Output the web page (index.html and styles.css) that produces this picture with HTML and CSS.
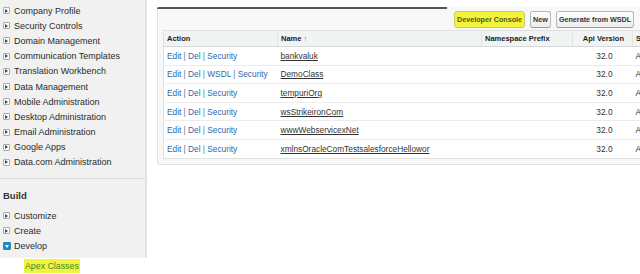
FILE: index.html
```html
<!DOCTYPE html>
<html>
<head>
<meta charset="utf-8">
<link rel="stylesheet" href="styles.css">
</head>
<body>
<div class="page">
  <aside class="side">
    <div class="panel">
      <ul class="nav top">
        <li><span class="tw"></span>Company Profile</li>
        <li><span class="tw"></span>Security Controls</li>
        <li><span class="tw"></span>Domain Management</li>
        <li><span class="tw"></span>Communication Templates</li>
        <li><span class="tw"></span>Translation Workbench</li>
        <li><span class="tw"></span>Data Management</li>
        <li><span class="tw"></span>Mobile Administration</li>
        <li><span class="tw"></span>Desktop Administration</li>
        <li><span class="tw"></span>Email Administration</li>
        <li><span class="tw"></span>Google Apps</li>
        <li><span class="tw"></span>Data.com Administration</li>
      </ul>
      <div class="build">
        <h3 class="build-title">Build</h3>
        <ul class="nav">
          <li><span class="tw"></span>Customize</li>
          <li><span class="tw"></span>Create</li>
          <li><span class="tw open"></span>Develop</li>
        </ul>
      </div>
    </div>
    <div class="sub"><span class="hl">Apex Classes</span></div>
  </aside>
  <main class="main">
    <div class="block">
      <div class="pb-head">
        <div class="pb-title"></div>
        <div class="pb-btns">
          <button class="btn btn-hl">Developer Console</button>
          <button class="btn">New</button>
          <button class="btn">Generate from WSDL</button>
        </div>
      </div>
      <table class="list">
        <colgroup>
          <col class="c-action"><col class="c-name"><col class="c-ns"><col class="c-api"><col class="c-status">
        </colgroup>
        <thead>
          <tr><th>Action</th><th>Name <span class="sort">&#8593;</span></th><th>Namespace Prefix</th><th class="num">Api Version</th><th>Status</th></tr>
        </thead>
        <tbody>
          <tr><td class="act"><a>Edit</a> | <a>Del</a> | <a>Security</a></td><td><a class="nm">bankvaluk</a></td><td></td><td class="num">32.0</td><td>Active</td></tr>
          <tr><td class="act"><a>Edit</a> | <a>Del</a> | <a>WSDL</a> | <a>Security</a></td><td><a class="nm">DemoClass</a></td><td></td><td class="num">32.0</td><td>Active</td></tr>
          <tr><td class="act"><a>Edit</a> | <a>Del</a> | <a>Security</a></td><td><a class="nm">tempuriOrg</a></td><td></td><td class="num">32.0</td><td>Active</td></tr>
          <tr><td class="act"><a>Edit</a> | <a>Del</a> | <a>Security</a></td><td><a class="nm">wsStrikeironCom</a></td><td></td><td class="num">32.0</td><td>Active</td></tr>
          <tr><td class="act"><a>Edit</a> | <a>Del</a> | <a>Security</a></td><td><a class="nm">wwwWebservicexNet</a></td><td></td><td class="num">32.0</td><td>Active</td></tr>
          <tr><td class="act"><a>Edit</a> | <a>Del</a> | <a>Security</a></td><td><a class="nm">xmlnsOracleComTestsalesforceHellowor</a></td><td></td><td class="num">32.0</td><td>Active</td></tr>
        </tbody>
      </table>
    </div>
  </main>
</div>
</body>
</html>
```
FILE: styles.css
```css
html, body {
  margin: 0;
  padding: 0;
  background: #fff;
  overflow: hidden;
}
body {
  font-family: "Liberation Sans", Arial, sans-serif;
  color: #333;
  width: 640px;
  height: 274px;
}
.page {
  display: flex;
  align-items: flex-start;
  width: 640px;
  height: 274px;
  overflow: hidden;
}
.side {
  flex: 0 0 147px;
  width: 147px;
}
.panel {
  background: #f1f1f1;
  border-right: 2px solid #e4e4e4;
  padding-bottom: 4px;
}
.nav {
  list-style: none;
  margin: 0;
  padding: 0;
}
.nav li {
  display: flex;
  align-items: center;
  height: 15.2px;
  font-size: 9px;
  color: #2b2b2b;
  padding-left: 3px;
  white-space: nowrap;
}
.nav.top {
  padding-top: 3px;
  padding-bottom: 8px;
  border-bottom: 1px solid #dcdcdc;
}
.tw {
  display: inline-flex;
  align-items: center;
  justify-content: center;
  width: 5px;
  height: 5px;
  border: 1px solid #a9a9a9;
  background: #fff;
  margin-right: 4px;
  border-radius: 1px;
}
.tw::after {
  content: "";
  border-left: 3px solid #444;
  border-top: 2px solid transparent;
  border-bottom: 2px solid transparent;
}
.tw.open {
  width: 6px;
  height: 6px;
  margin-right: 3px;
  background: #1f8ac0;
  border-color: #1f8ac0;
}
.tw.open::after {
  border-left: 2px solid transparent;
  border-right: 2px solid transparent;
  border-top: 3px solid #fff;
  border-bottom: 0;
}
.build {
  padding-top: 9px;
}
.build-title {
  margin: 0 0 5px 0;
  padding-left: 3px;
  font-size: 9.5px;
  font-weight: bold;
  line-height: 15px;
  color: #333;
}
.sub {
  margin-left: 15px;
  height: 17px;
  background: #fff;
  display: flex;
  align-items: center;
  padding-left: 9px;
}
.hl {
  background: #f2f23c;
  color: #3d8a2e;
  font-size: 8.8px;
  padding: 2px 1px;
}
.main {
  flex: 1 1 auto;
  overflow: hidden;
  height: 274px;
}
.block {
  margin: 7px 0 0 10px;
  width: 520px;
  background: #f8f8f8;
  border-left: 1px solid #e2e2e2;
  border-bottom: 1px solid #e2e2e2;
  border-bottom-left-radius: 4px;
  padding: 0 0 5px 5px;
}
.pb-head {
  display: flex;
  align-items: flex-start;
  height: 23px;
}
.pb-title {
  flex: 0 0 290px;
  height: 0;
  border-top: 2px solid #555;
  border-top-left-radius: 3px;
  margin-left: -6px;
}
.pb-btns {
  display: flex;
  gap: 5px;
  padding-top: 4px;
  margin-left: 7px;
}
.btn {
  font-family: "Liberation Sans", Arial, sans-serif;
  font-size: 7.2px;
  font-weight: bold;
  color: #333;
  height: 17px;
  padding: 0 2px;
  border: 1px solid #b8b8b8;
  border-bottom-color: #9a9a9a;
  border-radius: 3px;
  background: linear-gradient(#ffffff, #ececec);
  white-space: nowrap;
}
.btn-hl {
  background: #f4f43c;
  color: #4a5a18;
  border-color: #c8c86a;
}
.list {
  border-collapse: collapse;
  table-layout: fixed;
  width: 520px;
  background: #fff;
  border: 1px solid #e0e0e0;
  font-size: 8.3px;
}
.c-action { width: 114px; }
.c-name { width: 204px; }
.c-ns { width: 91px; }
.c-api { width: 60px; }
.c-status { width: 51px; }
.list th {
  height: 15px;
  background: #f2f3f3;
  border-bottom: 1px solid #d4dadc;
  border-left: 1px solid #e3e3e3;
  text-align: left;
  font-size: 7.5px;
  font-weight: bold;
  color: #222;
  padding: 0 3px;
  white-space: nowrap;
}
.list th:first-child { border-left: 0; }
.list th.num { text-align: right; padding-right: 8px; }
.sort { font-weight: normal; color: #666; font-size: 7px; }
.list td {
  height: 17.6px;
  padding: 0 3px;
  border-bottom: 1px solid #ececec;
  white-space: nowrap;
  overflow: hidden;
  color: #333;
}
.list tbody tr:last-child td { border-bottom: 0; }
.list td.act { color: #4a78ad; }
.act a { color: #2d68a8; }
.nm {
  color: #333;
  text-decoration: underline;
}
.list td.num { text-align: right; padding-right: 20px; }
```
